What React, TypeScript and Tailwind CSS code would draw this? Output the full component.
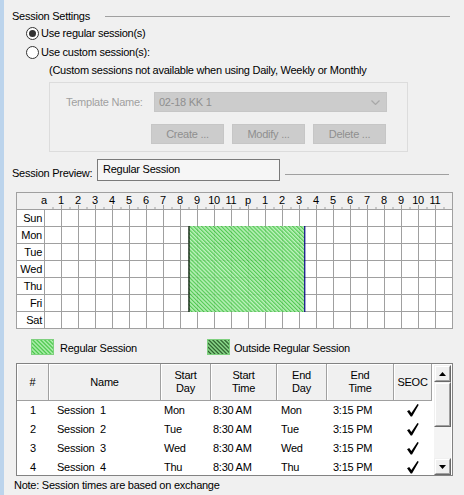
import React from "react";

const FONT = "Liberation Sans, Arial, sans-serif";

function Radio({ checked }: { checked: boolean }) {
  return (
    <span className="w-[13px] h-[13px] rounded-full border border-[#333333] bg-white flex items-center justify-center shrink-0">
      {checked && <span className="w-[7px] h-[7px] rounded-full bg-[#333333]" />}
    </span>
  );
}

function HatchDefs({ id, bg, fg }: { id: string; bg: string; fg: string }) {
  return (
    <defs>
      <pattern id={id} width="2.8" height="2.8" patternUnits="userSpaceOnUse" patternTransform="rotate(-45)">
        <rect width="2.8" height="2.8" fill={bg} />
        <rect width="1.2" height="2.8" fill={fg} />
      </pattern>
    </defs>
  );
}

function ScheduleGrid() {
  const labels = ["a", "1", "2", "3", "4", "5", "6", "7", "8", "9", "10", "11", "p", "1", "2", "3", "4", "5", "6", "7", "8", "9", "10", "11"];
  const days = ["Sun", "Mon", "Tue", "Wed", "Thu", "Fri", "Sat"];
  const x0 = 28;
  const cw = 17;
  const hy = 17;
  const W = 437;
  const H = 137;
  const gx1 = x0 + 8.5 * cw;
  const gx2 = x0 + 15.25 * cw + 1;
  return (
    <svg width={W} height={H} viewBox={`0 0 ${W} ${H}`} style={{ fontFamily: FONT }} className="block shrink-0">
      <HatchDefs id="regHatch" bg="#b2f0b2" fg="#3cc23c" />
      <rect x="0" y="0" width={W} height={H} fill="#ffffff" />
      <rect x="0" y="0" width={W} height={hy} fill="#f0f0f0" />
      <rect x="0" y={hy} width={x0} height={H - hy} fill="#ffffff" />
      {Array.from({ length: 25 }).map((_, h) => (
        <line key={"v" + h} x1={x0 + h * cw + 0.5} y1={h === 0 ? hy : hy - 4} x2={x0 + h * cw + 0.5} y2={H} stroke="#a0a0a0" strokeWidth="1" />
      ))}
      {Array.from({ length: 24 }).map((_, h) => (
        <line key={"t" + h} x1={x0 + h * cw + 9} y1={hy - 2} x2={x0 + h * cw + 9} y2={hy} stroke="#a0a0a0" strokeWidth="1" />
      ))}
      {Array.from({ length: 8 }).map((_, r) => (
        <line key={"h" + r} x1={0} y1={hy + r * 17 + 0.5} x2={W} y2={hy + r * 17 + 0.5} stroke="#a0a0a0" strokeWidth="1" />
      ))}
      <rect x={gx1} y={hy + 17} width={gx2 - gx1} height={17 * 5 + 1} fill="url(#regHatch)" opacity="0.88" />
      <line x1={gx1 + 0.5} y1={hy + 17} x2={gx1 + 0.5} y2={hy + 17 * 6 + 1} stroke="#000000" strokeWidth="1.2" />
      <line x1={gx2 + 0.5} y1={hy + 17} x2={gx2 + 0.5} y2={hy + 17 * 6 + 1} stroke="#000080" strokeWidth="1.2" />
      {labels.map((l, h) => (
        <text key={"l" + h} x={x0 + h * cw} y={12} fontSize="11" textAnchor="middle" fill="#000">
          {l}
        </text>
      ))}
      {days.map((d, i) => (
        <text key={d} x={26} y={hy + i * 17 + 13} fontSize="11" textAnchor="end" fill="#000">
          {d}
        </text>
      ))}
      <rect x="0.5" y="0.5" width={W - 1} height={H - 1} fill="none" stroke="#a0a0a0" />
    </svg>
  );
}

function Swatch({ id, bg, fg }: { id: string; bg: string; fg: string }) {
  return (
    <svg width="23" height="16" viewBox="0 0 23 16" className="block shrink-0">
      <HatchDefs id={id} bg={bg} fg={fg} />
      <rect x="0" y="0" width="23" height="16" fill={`url(#${id})`} />
      <rect x="0.5" y="0.5" width="22" height="15" fill="none" stroke="#7fd07f" />
    </svg>
  );
}

function Check() {
  return (
    <svg width="12" height="13" viewBox="0 0 11 12" className="block">
      <path d="M0 6.8 L2 5.6 L4 8.4 L9.6 0 L10.8 0.6 L4.6 11.6 L3.4 11.6 Z" fill="#000" />
    </svg>
  );
}

function ArrowBtn({ up }: { up: boolean }) {
  return (
    <div className="w-[17px] h-[17px] bg-[#f0f0f0] border border-t-[#f0f0f0] border-l-[#f0f0f0] border-r-[#696969] border-b-[#696969] shrink-0">
      <div className="w-full h-full border border-t-white border-l-white border-r-[#a0a0a0] border-b-[#a0a0a0] flex items-center justify-center">
        <svg width="7" height="4" viewBox="0 0 7 4" className="block">
          {up ? <path d="M3.5 0 L7 4 L0 4 Z" fill="#000" /> : <path d="M0 0 L7 0 L3.5 4 Z" fill="#000" />}
        </svg>
      </div>
    </div>
  );
}

function HeaderCell({ w, lines }: { w: string; lines: string[] }) {
  return (
    <div className={`${w} h-full bg-[#f0f0f0] border-r border-b border-[#a0a0a0] shadow-[inset_1px_1px_0_#ffffff] flex flex-col items-center justify-center leading-[13px] shrink-0`}>
      {lines.map((l) => (
        <span key={l}>{l}</span>
      ))}
    </div>
  );
}

export default function App() {
  const rows = [
    { n: "1", name: "Session  1", sd: "Mon", st: "8:30 AM", ed: "Mon", et: "3:15 PM" },
    { n: "2", name: "Session  2", sd: "Tue", st: "8:30 AM", ed: "Tue", et: "3:15 PM" },
    { n: "3", name: "Session  3", sd: "Wed", st: "8:30 AM", ed: "Wed", et: "3:15 PM" },
    { n: "4", name: "Session  4", sd: "Thu", st: "8:30 AM", ed: "Thu", et: "3:15 PM" },
  ];
  return (
    <div className="w-[464px] h-[495px] bg-[#f0f0f0] flex overflow-hidden text-[11px] leading-[13px] tracking-[-0.25px] text-black font-['Liberation_Sans',Arial,sans-serif]">
      <div className="w-[4px] h-full bg-[#bcd4ec] shrink-0" />
      <div className="flex-1 flex flex-col">
        <div className="h-[14px] mt-[9px] flex items-center">
          <div className="w-[101px] pl-[8px]">Session Settings</div>
          <div className="w-[345px] h-px bg-[#a0a0a0]" />
        </div>
        <div className="h-[14px] mt-[3px] flex items-center pl-[22px] gap-[2px]">
          <Radio checked />
          <span>Use regular session(s)</span>
        </div>
        <div className="h-[14px] mt-[5px] flex items-center pl-[22px] gap-[2px]">
          <Radio checked={false} />
          <span>Use custom session(s):</span>
        </div>
        <div className="h-[14px] mt-[4px] flex items-center pl-[45px]">
          (Custom sessions not available when using Daily, Weekly or Monthly
        </div>
        <div className="mt-[5px] ml-[45px] w-[359px] h-[70px] border border-[#dcdcdc] flex flex-col">
          <div className="mt-[9px] flex items-center h-[20px]">
            <div className="w-[104px] pl-[16px] text-[#a0a0a0]">Template Name:</div>
            <div className="w-[233px] h-[20px] bg-[#cccccc] border border-[#c6c6c6] flex items-center justify-between pl-[4px] pr-[6px] text-[#8f8f8f]">
              <span>02-18 KK 1</span>
              <svg width="9" height="5" viewBox="0 0 9 5" className="block">
                <path d="M0.5 0.5 L4.5 4.5 L8.5 0.5" fill="none" stroke="#a8a8a8" strokeWidth="1.2" />
              </svg>
            </div>
          </div>
          <div className="mt-[12px] ml-[101px] flex gap-[8px]">
            {["Create ...", "Modify ...", "Delete ..."].map((b) => (
              <div key={b} className="w-[73px] h-[20px] bg-[#cccccc] border border-[#c6c6c6] flex items-center justify-center text-[#8f8f8f]">
                {b}
              </div>
            ))}
          </div>
        </div>
        <div className="mt-[7px] flex items-start h-[22px]">
          <div className="w-[93px] pl-[8px] mt-[8px]">Session Preview:</div>
          <div className="w-[183px] h-[22px] border border-[#7a7a7a] bg-[#f6f6f6] pl-[5px] pt-[3px]">Regular Session</div>
          <div className="ml-[5px] mt-[15px] w-[164px] h-px bg-[#a0a0a0]" />
        </div>
        <div className="mt-[11px] ml-[12px]">
          <ScheduleGrid />
        </div>
        <div className="mt-[10px] h-[16px] flex items-center">
          <div className="w-[176px] ml-[27px] flex items-center gap-[6px] shrink-0">
            <Swatch id="sw1" bg="#b2f0b2" fg="#3cc23c" />
            <span className="pt-[2px]">Regular Session</span>
          </div>
          <div className="flex items-center gap-[4px]">
            <Swatch id="sw2" bg="#8fe08f" fg="#1f4d1f" />
            <span className="pt-[2px]">Outside Regular Session</span>
          </div>
        </div>
        <div className="mt-[8px] ml-[12px] w-[437px] h-[113px] border border-[#828282] bg-white flex shrink-0">
          <div className="w-[415px] flex flex-col shrink-0">
            <div className="h-[37px] flex shrink-0">
              <HeaderCell w="w-[32px]" lines={["#"]} />
              <HeaderCell w="w-[112px]" lines={["Name"]} />
              <HeaderCell w="w-[50px]" lines={["Start", "Day"]} />
              <HeaderCell w="w-[66px]" lines={["Start", "Time"]} />
              <HeaderCell w="w-[50px]" lines={["End", "Day"]} />
              <HeaderCell w="w-[67px]" lines={["End", "Time"]} />
              <HeaderCell w="w-[38px]" lines={["SEOC"]} />
            </div>
            {rows.map((r) => (
              <div key={r.n} className="h-[19px] flex items-center shrink-0">
                <div className="w-[32px] text-center">{r.n}</div>
                <div className="w-[112px] pl-[8px] whitespace-pre">{r.name}</div>
                <div className="w-[50px] pl-[3px]">{r.sd}</div>
                <div className="w-[66px] pl-[2px]">{r.st}</div>
                <div className="w-[50px] pl-[4px]">{r.ed}</div>
                <div className="w-[67px] pl-[6px]">{r.et}</div>
                <div className="w-[38px] flex justify-center">
                  <Check />
                </div>
              </div>
            ))}
          </div>
          <div className="ml-[2px] w-[17px] pt-[1px] flex flex-col shrink-0">
            <ArrowBtn up />
            <div className="w-[17px] h-[45px] bg-[#f0f0f0] border border-t-[#f0f0f0] border-l-[#f0f0f0] border-r-[#696969] border-b-[#696969] shrink-0">
              <div className="w-full h-full border border-t-white border-l-white border-r-[#a0a0a0] border-b-[#a0a0a0]" />
            </div>
            <div className="w-[17px] flex-1 bg-[#f4f4f4]" />
            <ArrowBtn up={false} />
          </div>
        </div>
        <div className="mt-[3px] pl-[10px] h-[13px]">Note: Session times are based on exchange</div>
      </div>
    </div>
  );
}
